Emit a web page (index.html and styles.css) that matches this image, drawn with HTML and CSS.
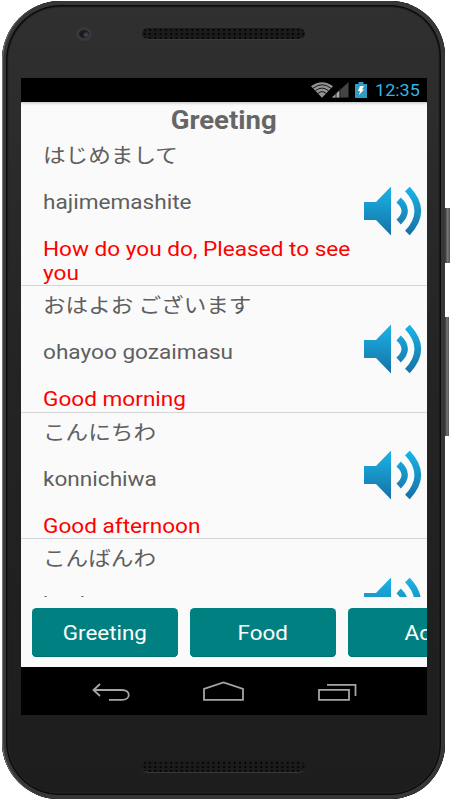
FILE: index.html
```html
<!DOCTYPE html>
<html lang="en">
<head>
<meta charset="utf-8">
<title>Greeting</title>
<link rel="stylesheet" href="styles.css">
</head>
<body>
<svg class="defs" width="0" height="0" aria-hidden="true">
  <defs>
    <linearGradient id="blue" gradientUnits="userSpaceOnUse" x1="0" y1="0" x2="0" y2="50">
      <stop offset="0" stop-color="#1ab6e6"/><stop offset="1" stop-color="#166fa6"/>
    </linearGradient>
    <symbol id="speaker" viewBox="0 0 58 50">
      <path fill="url(#blue)" d="M0 16H12L27 0.5V49.5L12 34H0Z"/>
      <path fill="none" stroke="url(#blue)" stroke-width="6.4" d="M34.6 14Q46.8 25 34.6 36M43.4 3Q64.2 25 43.4 47"/>
    </symbol>
  </defs>
</svg>
<div class="phone">
  <div class="shell">
    <header class="top"><i class="camera"></i><i class="grille"></i></header>
    <main class="screen">
      <div class="status">
        <svg width="38" height="16" viewBox="0 0 38 16">
          <path fill="#929292" d="M0 4.2Q11 -3.8 22 4.2L11 15.8Z"/>
          <path fill="none" stroke="#171717" stroke-width="1" d="M2 6.3Q11 -.8 20 6.3M4.5 8.7Q11 3.5 17.5 8.7M7 11.3Q11 8 15 11.3"/>
          <path fill="#444" d="M37.5 0V15.5H21Z"/><path fill="#aaa" d="M28.5 8.5V15.5H21Z"/>
          <path stroke="#222" d="M25 10V16M29 6V16"/>
        </svg>
        <svg class="battery" width="12" height="16" viewBox="0 0 12 16">
          <path fill="#339bc2" d="M0 2H3.5V0H8.5V2H12V16H0Z"/><path fill="#fff" d="M5 4H9L7 7.4H9L4 13L5 9H3Z"/>
        </svg>
        <span class="time">12:35</span>
      </div>
      <h1><span>Greeting</span></h1>
      <div class="list">
        <article class="row"><div class="words"><p class="jp" lang="ja"><span>はじめまして</span></p><p><span>hajimemashite</span></p><p class="en"><span>How do you do, Pleased to see<br>you</span></p></div><svg class="speaker"><use href="#speaker"/></svg></article>
        <article class="row"><div class="words"><p class="jp" lang="ja"><span>おはよお ございます</span></p><p><span>ohayoo gozaimasu</span></p><p class="en"><span>Good morning</span></p></div><svg class="speaker"><use href="#speaker"/></svg></article>
        <article class="row"><div class="words"><p class="jp" lang="ja"><span>こんにちわ</span></p><p><span>konnichiwa</span></p><p class="en"><span>Good afternoon</span></p></div><svg class="speaker"><use href="#speaker"/></svg></article>
        <article class="row last"><div class="words"><p class="jp" lang="ja"><span>こんばんわ</span></p><p><span>konbanwa</span></p></div><svg class="speaker"><use href="#speaker"/></svg></article>
      </div>
      <div class="tabs"><button><span>Greeting</span></button><button><span>Food</span></button><button><span>Adj</span></button></div>
      <nav>
        <svg width="406" height="48" viewBox="0 0 406 48" fill="none" stroke="#a5a5a5" stroke-width="1.8">
          <path d="M79 17L72.5 23L79 29M73 23H101C110 23 110 32.8 101 32.8H88"/>
          <path d="M183 32.8V22L202.5 15.4L222 22V32.8Z"/>
          <path d="M298 22.8H328V32.8H298ZM306 17.8H334.5V29"/>
        </svg>
      </nav>
    </main>
    <footer><i class="grille"></i></footer>
  </div>
  <i class="key power"></i><i class="key volume"></i>
</div>
</body>
</html>
```

FILE: styles.css
```css
* { box-sizing: border-box; }
body { margin: 0; width: 450px; height: 800px; overflow: hidden; background: #fff; font-family: Roboto, sans-serif; }
.defs { position: absolute; }
.phone { position: relative; width: 450px; height: 800px; padding: 1px 5px 1px 2px; }
.shell {
  width: 443px; height: 798px; padding: 0 19px; overflow: hidden;
  border-radius: 59px 55px 55px 57px;
  background: linear-gradient(#303030, #242424 45%, #1d1d1d);
  box-shadow: inset 2px 0 1px -1px #777c79, inset 0 0 0 4px #363837, inset 0 0 0 5.5px #0c0c0c, inset 0 0 0 6.5px #252525;
}
.top { display: flex; height: 77px; padding: 26px 0 0 55px; }
.camera { width: 16px; height: 14px; border: 3px solid #383838; border-radius: 50%; background: radial-gradient(circle at 70% 60%, #654b59, #1b1a22 40%); }
.grille { display: block; width: 163px; height: 12px; border-radius: 6px; border-bottom: 1px solid #383838; background-color: #1b1b1b; background-image: radial-gradient(circle, #050505 1px, transparent 1.3px); background-size: 5.3px 4px; }
.top .grille { margin: 1px 0 0 50px; }
.screen { display: flex; flex-direction: column; width: 406px; height: 637px; overflow: hidden; background: #fafafa; }
.status { flex: none; display: flex; justify-content: flex-end; align-items: center; height: 24px; padding-right: 8px; background: #000; }
.battery { margin: 0 8px 0 7px; }
.time { color: #33b5e5; font-size: 17px; width: 44px; white-space: nowrap; transform: scaleX(1.06); transform-origin: left; }
.status svg { position: relative; left: 1px; }
.status .battery { left: 0; }
h1 { flex: none; height: 34px; margin: 0; padding-top: 4px; text-align: center; color: #666; font-size: 25px; line-height: 30px; box-shadow: inset 0 3px 3px -2px #bbb; }
h1 span { display: inline-block; transform: translateX(-.5px) scaleX(1.1); }
.list { flex: none; height: 461px; overflow: hidden; }
.row { display: flex; align-items: center; justify-content: space-between; height: 126.5px; padding: 0 5px 0 22px; border-bottom: 1px solid #d5d5d5; }
.row:first-child { height: 150px; }
.words { height: 100%; padding-top: 8px; }
.words p { height: 23.5px; margin: 0 0 23.5px; font-size: 20px; line-height: 23.5px; color: #5f5f5f; white-space: nowrap; }
.words span { display: inline-block; transform: scaleX(1.13); transform-origin: left; }
.words .en { color: #f00; }
.words .jp { margin: -1px 0 24.5px; font-family: "Noto Sans CJK JP", sans-serif; font-weight: 400; }
.last .words .jp { margin-bottom: 23.5px; }
.speaker { flex: none; width: 58px; height: 50px; }
.tabs { flex: none; display: flex; gap: 11.5px; height: 70px; padding: 10.5px 0 0 10.5px; }
.tabs button { flex: none; width: 146.5px; height: 49.5px; padding: 1px 0 0; border: 0; border-radius: 4.5px; background: #008080; color: #fff; font: 20px/24px Roboto, sans-serif; box-shadow: inset 0 -1px #007070; }
.tabs span { display: inline-block; transform: translateX(.3px) scaleX(1.12); }
nav { flex: none; height: 48px; background: #000; }
nav svg { display: block; }
footer { padding: 46px 0 0 121px; }
.key { position: absolute; left: 445px; width: 5px; background: linear-gradient(90deg, #333, #777, #555); }
.power { top: 208px; height: 55px; }
.volume { top: 317px; width: 4px; height: 119px; }
```
